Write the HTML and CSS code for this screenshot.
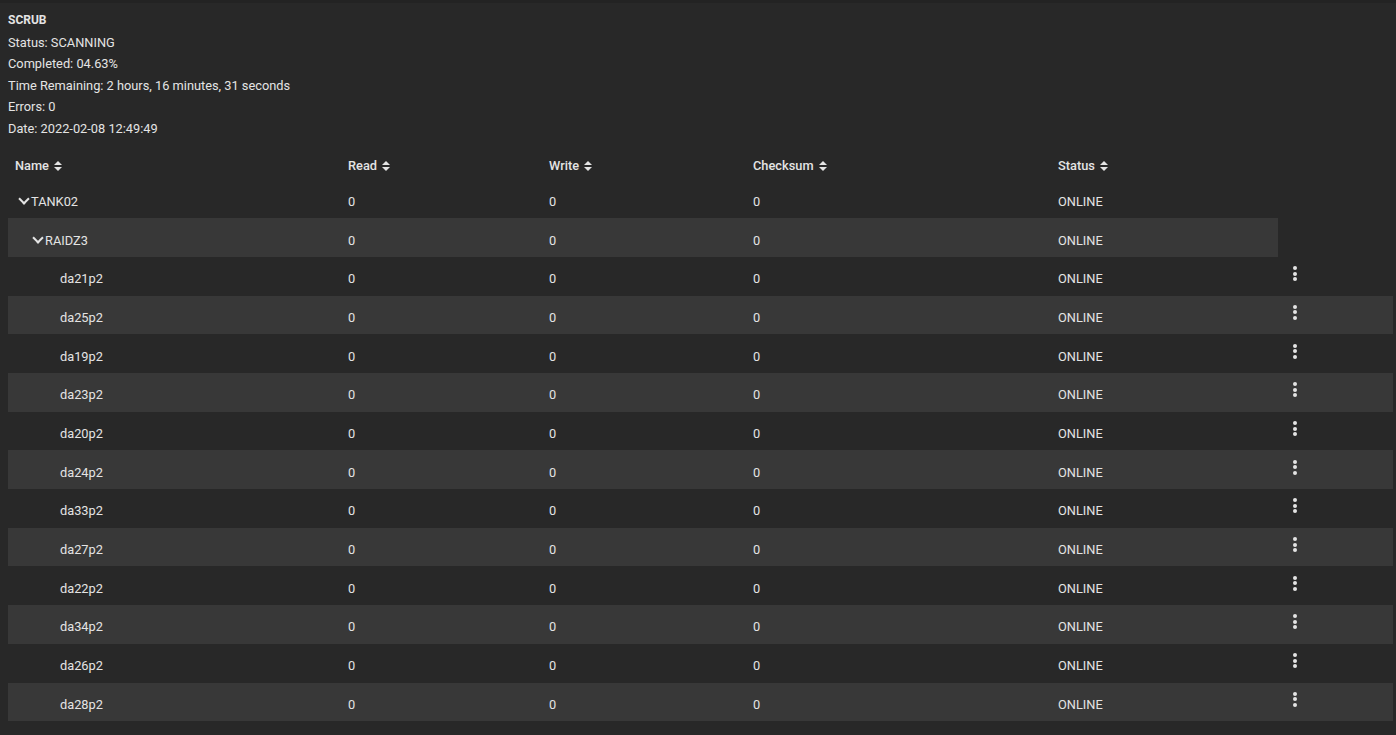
FILE: index.html
```html
<!DOCTYPE html>
<html lang="en">
<head>
    <meta charset="UTF-8">
    <title>Pool Status</title>
    <link rel="stylesheet" href="styles.css">
</head>
<body>
    <div class="pool-status">
        <div class="scrub-info">
            <div class="scrub-title">SCRUB</div>
            <div>Status: SCANNING</div>
            <div>Completed: 04.63%</div>
            <div>Time Remaining: 2 hours, 16 minutes, 31 seconds</div>
            <div>Errors: 0</div>
            <div>Date: 2022-02-08 12:49:49</div>
        </div>

        <table class="pool-table">
            <thead>
                <tr>
                    <th class="col-name">Name <span class="sort"></span></th>
                    <th class="col-read">Read <span class="sort"></span></th>
                    <th class="col-write">Write <span class="sort"></span></th>
                    <th class="col-checksum">Checksum <span class="sort"></span></th>
                    <th class="col-status">Status <span class="sort"></span></th>
                    <th class="col-actions"></th>
                </tr>
            </thead>
            <tbody id="rows">
                <tr>
                    <td><span class="node level-0"><span class="chevron"></span>TANK02</span></td>
                    <td>0</td><td>0</td><td>0</td><td>ONLINE</td><td class="no-action"></td>
                </tr>
                <tr class="striped">
                    <td><span class="node level-1"><span class="chevron"></span>RAIDZ3</span></td>
                    <td>0</td><td>0</td><td>0</td><td>ONLINE</td><td class="no-action"></td>
                </tr>
            </tbody>
        </table>
    </div>

    <script>
        const disks = ['da21p2', 'da25p2', 'da19p2', 'da23p2', 'da20p2', 'da24p2',
                       'da33p2', 'da27p2', 'da22p2', 'da34p2', 'da26p2', 'da28p2'];
        const rows = document.getElementById('rows');

        disks.forEach((disk, i) => {
            const tr = document.createElement('tr');
            if (i % 2 === 1) tr.className = 'striped';
            tr.innerHTML =
                '<td><span class="node level-2">' + disk + '</span></td>' +
                '<td>0</td><td>0</td><td>0</td><td>ONLINE</td>' +
                '<td class="actions"><span class="kebab"><i></i><i></i><i></i></span></td>';
            rows.appendChild(tr);
        });
    </script>
</body>
</html>
```

FILE: styles.css
```css
body {
    margin: 0;
    background-color: #282828;
    border-top: 3px solid #232323;
    color: #e4e4e4;
    font-family: Roboto, "Liberation Sans", sans-serif;
    font-size: 12.8px;
}

.pool-status {
    padding: 7px 3px 14px 8px;
}

.scrub-info {
    line-height: 21.6px;
}

.scrub-title {
    font-weight: bold;
    font-size: 12px;
}

.pool-table {
    width: 100%;
    margin-top: 10px;
    border-collapse: collapse;
    table-layout: fixed;
}

.pool-table th,
.pool-table td {
    box-sizing: border-box;
    padding: 0 0 0 8px;
    text-align: left;
    vertical-align: middle;
}

.pool-table th {
    height: 30px;
    padding-top: 2px;
    font-weight: 500;
}

.pool-table td {
    height: 38.7px;
    padding-top: 5px;
}

.col-name { width: 332px; }
.col-read { width: 201px; }
.col-write { width: 204px; }
.col-checksum { width: 305px; }
.col-status { width: 228px; }

.pool-table th.col-name,
.pool-table td:first-child {
    padding-left: 7px;
}

.striped td {
    background-color: #383838;
}

.striped td.no-action {
    background-color: transparent;
}

.sort {
    display: inline-block;
    position: relative;
    width: 8px;
    height: 10px;
    margin-left: 2px;
    vertical-align: -1px;
}

.sort::before,
.sort::after {
    content: "";
    position: absolute;
    left: 0;
    border-left: 4px solid transparent;
    border-right: 4px solid transparent;
}

.sort::before {
    top: 0;
    border-bottom: 4px solid #e4e4e4;
}

.sort::after {
    bottom: 0;
    border-top: 4px solid #e4e4e4;
}

.node {
    display: inline-flex;
    align-items: center;
}

.level-0 { padding-left: 3px; }
.level-1 { padding-left: 17px; }
.level-2 { padding-left: 45px; }

.chevron {
    width: 6px;
    height: 6px;
    margin: 0 3px -1px 2px;
    border-right: 2px solid #e4e4e4;
    border-bottom: 2px solid #e4e4e4;
    transform: translateY(-3px) rotate(45deg);
}

.pool-table td.actions {
    padding-left: 15px;
}

.kebab {
    display: inline-flex;
    flex-direction: column;
    gap: 1.5px;
    transform: translateY(-9px);
}

.kebab i {
    width: 4px;
    height: 4px;
    border-radius: 50%;
    background-color: #e4e4e4;
}
```
